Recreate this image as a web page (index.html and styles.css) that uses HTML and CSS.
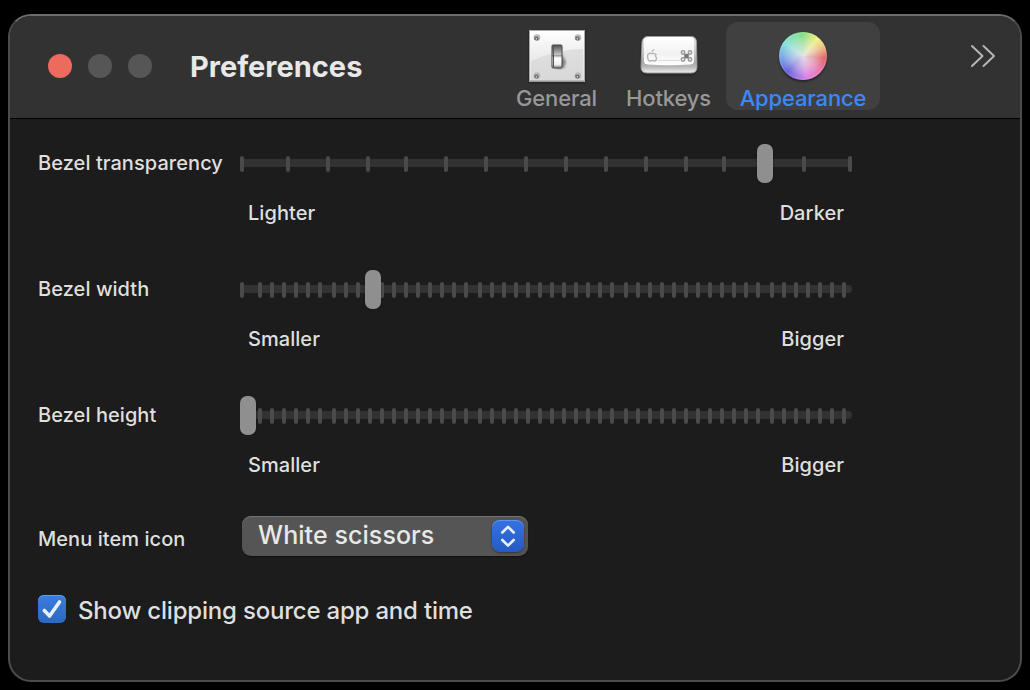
FILE: index.html
```html
<!DOCTYPE html>
<html lang="en">
<head>
<meta charset="utf-8">
<title>Preferences</title>
<link rel="stylesheet" href="styles.css">
</head>
<body>
<div class="window">
  <header class="titlebar">
    <div class="lights"><span class="light close"></span><span class="light"></span><span class="light"></span></div>
    <h1 class="title">Preferences</h1>
    <nav class="tabs">
      <div class="tab general">
        <svg class="icon" width="64" height="60" viewBox="0 0 64 60">
          <defs>
            <linearGradient id="plate" x1="0" y1="0" x2="0" y2="1"><stop offset="0" stop-color="#fff"/><stop offset=".5" stop-color="#ececec"/><stop offset="1" stop-color="#e0e0e0"/></linearGradient>
            <linearGradient id="slot" x1="0" y1="0" x2="0" y2="1"><stop offset="0" stop-color="#555"/><stop offset=".2" stop-color="#888"/><stop offset=".42" stop-color="#c4c4c4"/><stop offset=".46" stop-color="#999"/><stop offset=".56" stop-color="#fff"/><stop offset=".85" stop-color="#eee"/><stop offset="1" stop-color="#777"/></linearGradient>
            <radialGradient id="screw" cx=".4" cy=".7"><stop offset="0" stop-color="#fff"/><stop offset=".35" stop-color="#666"/><stop offset="1" stop-color="#bbb"/></radialGradient>
            <filter id="soft"><feGaussianBlur stdDeviation="1.3"/></filter>
            <filter id="fine"><feGaussianBlur stdDeviation=".5"/></filter>
          </defs>
          <rect x="4" y="7" width="56" height="52" fill="#111" opacity=".5" filter="url(#soft)"/>
          <rect x="4.500" y="6.500" width="55" height="51" fill="url(#plate)" stroke="#aaa"/>
          <path d="M6 37Q34 25 58 25V56H6Z" fill="#d0d0d0" opacity=".5"/>
          <path d="M5 57H59" stroke="#888"/>
          <path d="M37 30L41 38L39 44L31 45Z" fill="#444" opacity=".6" filter="url(#soft)"/>
          <g filter="url(#fine)">
            <rect x="27" y="21" width="10" height="23" rx="1" fill="url(#slot)" stroke="#444"/>
            <path d="M28.500 22v21" stroke="#555"/>
            <g fill="url(#screw)"><circle cx="12" cy="13.500" r="3.300"/><circle cx="53" cy="13.500" r="3.300"/><circle cx="12" cy="51.500" r="3.300"/><circle cx="53" cy="51.500" r="3.300"/></g>
          </g>
        </svg>
        <span class="tab-label general-label">General</span>
      </div>
      <div class="tab hotkeys">
        <svg class="icon" width="64" height="60" viewBox="0 0 64 60">
          <defs>
            <linearGradient id="side" x1="0" y1="0" x2="0" y2="1"><stop offset="0" stop-color="#eee"/><stop offset=".7" stop-color="#aaa"/><stop offset=".83" stop-color="#b8b8b8"/><stop offset="1" stop-color="#f0f0f0"/></linearGradient>
            <linearGradient id="face" x1="0" y1="0" x2="0" y2="1"><stop offset="0" stop-color="#fff"/><stop offset=".6" stop-color="#f2f2f2"/><stop offset="1" stop-color="#fff"/></linearGradient>
          </defs>
          <rect x="4" y="15" width="56" height="36" rx="7" fill="#111" opacity=".5" filter="url(#soft)"/>
          <path d="M11 12.500H54Q59 12.500 59.500 18L60 43Q60 49 54 49H10Q4 49 4 43L5 18Q6 12.500 11 12.500Z" fill="url(#side)" stroke="#999"/>
          <path filter="url(#fine)" d="M12 13H53Q57 13.500 57 18V37Q57 40 53 40.500Q32 42 11 40.500Q7 40 7 37V18Q7 13.500 12 13Z" fill="url(#face)"/>
          <g filter="url(#fine)">
            <path d="M14.500 29.500Q10.500 28.500 10.500 32.500Q11 37.500 13.500 37Q15.500 36 17.500 37Q19.500 37 19.500 33.500Q17.500 32 19 30.500Q16.500 29 14.500 29.500M15 27.500l2-2" fill="none" stroke="#b4b4b4" stroke-width="1.400"/>
            <rect x="47.200" y="29.800" width="4.600" height="4.600" fill="#777"/>
            <g fill="none" stroke="#999" stroke-width="1.500"><circle cx="46" cy="28.500" r="1.700"/><circle cx="53" cy="28.500" r="1.700"/><circle cx="46" cy="35.500" r="1.700"/><circle cx="53" cy="35.500" r="1.700"/></g>
          </g>
          <path d="M21 36.500h22" stroke="#ddd"/>
        </svg>
        <span class="tab-label hotkeys-label">Hotkeys</span>
      </div>
      <div class="tab appearance selected">
        <div class="icon wheel-box"><div class="wheel"></div></div>
        <span class="tab-label appearance-label">Appearance</span>
      </div>
    </nav>
    <svg class="more" width="28" height="26" viewBox="0 0 28 26" fill="none" stroke="#b5b5b5" stroke-width="2" stroke-linecap="round" stroke-linejoin="round"><path d="M2 3L12.500 13L2 23M13.500 3L24 13L13.500 23"/></svg>
  </header>
  <main class="content">
    <section class="field">
      <label class="name">Bezel transparency</label>
      <svg class="slider" data-count="16" data-step="39.733" data-value="765" width="612" height="40" viewBox="240 0 612 40"></svg>
      <div class="range"><span>Lighter</span><span>Darker</span></div>
    </section>
    <section class="field">
      <label class="name">Bezel width</label>
      <svg class="slider" data-count="50" data-step="12.165" data-value="373" width="612" height="40" viewBox="240 0 612 40"></svg>
      <div class="range"><span>Smaller</span><span>Bigger</span></div>
    </section>
    <section class="field">
      <label class="name">Bezel height</label>
      <svg class="slider" data-count="50" data-step="12.165" data-value="248" width="612" height="40" viewBox="240 0 612 40"></svg>
      <div class="range"><span>Smaller</span><span>Bigger</span></div>
    </section>
    <section class="menu-row">
      <label class="name">Menu item icon</label>
      <div class="select">
        <span class="select-text">White scissors</span>
        <span class="stepper"><svg width="32" height="32" viewBox="0 0 32 32" fill="none" stroke="#e8eefb" stroke-width="2.600" stroke-linecap="round" stroke-linejoin="round"><path d="M10.300 12.500L16 6.800L21.700 12.500M10.300 20L16 25.700L21.700 20"/></svg></span>
      </div>
    </section>
    <section class="check-row">
      <span class="checkbox"><svg width="28" height="28" viewBox="0 0 28 28" fill="none" stroke="#e8effb" stroke-width="3.600" stroke-linecap="round" stroke-linejoin="round"><path d="M6.300 15.500L11.600 21L21.500 7"/></svg></span>
      <span class="check-text">Show clipping source app and time</span>
    </section>
  </main>
</div>
<script src="sliders.js"></script>
</body>
</html>
```
FILE: styles.css
```css
* { box-sizing: border-box; }
body { margin: 0; padding: 14px 8px 8px; height: 690px; background: #000; font-family: Inter, "Liberation Sans", sans-serif; font-weight: 450; color: #dfdfdf; overflow: hidden; }
.window { height: 668px; border: 2px solid #4c4c4c; border-top-color: #6c6c6c; border-radius: 23px; background: #1c1c1c; overflow: hidden; }
.titlebar { display: flex; height: 103px; background: #323232; border-bottom: 1px solid #000; }
.lights { display: flex; gap: 16px; padding: 38px 0 0 38px; width: 180px; }
.light { width: 24px; height: 24px; border-radius: 50%; background: #565656; }
.close { background: #ed6a5f; }
.title { margin: 0; width: 312px; padding-top: 33px; font-size: 29px; line-height: 35px; font-weight: 700; letter-spacing: 0; color: #e8e8e8; white-space: nowrap; }
.tabs { display: flex; padding-top: 6px; }
.tab { display: flex; flex-direction: column; align-items: center; height: 88px; padding-top: 2px; border-radius: 12px; color: #989898; }
.general { width: 110px; }
.hotkeys { width: 114px; }
.appearance { width: 154px; }
.selected { background: #404040; color: #3b88fb; }
.icon { flex: none; height: 60px; }
.tab-label { font-size: 22px; line-height: 28px; letter-spacing: -.15px; white-space: nowrap; }
.general-label, .hotkeys-label { margin-right: 1px; }
.wheel-box { display: flex; align-items: center; padding-top: 4px; }
.wheel { width: 48px; height: 48px; border-radius: 50%; background: radial-gradient(circle, rgba(232,232,232,.9), rgba(232,232,232,.5) 35%, rgba(232,232,232,.15) 60%, transparent 70%), conic-gradient(#79e079, #f5f276 40deg, #eebc78 65deg, #e0575c 95deg, #e96bab 130deg, #dd75e6 170deg, #9a68e6 195deg, #5b55dc 225deg, #6793e8 260deg, #7ce0d8 305deg, #79e079); box-shadow: inset 0 0 2px 1px rgba(255,255,255,.25), 0 2px 2px rgba(0,0,0,.4); }
.more { margin: 27px 0 0 90px; }
.content { padding: 24px 0 0 28px; }
.field { display: grid; grid-template-columns: 202px 612px; grid-template-rows: 40px 24px; row-gap: 18px; margin-bottom: 44px; }
.field:nth-of-type(3) { margin-bottom: 39px; }
.name { font-size: 20px; line-height: 40px; letter-spacing: .06px; white-space: nowrap; }
.slider { display: block; }
.track { fill: #323232; }
.tick { fill: #4a4a4a; }
.thumb { fill: #8f8f8f; filter: drop-shadow(0 1px 1px rgba(0,0,0,.35)); }
.range { grid-column: 2; display: flex; justify-content: space-between; padding: 0 8px; font-size: 20px; line-height: 24px; letter-spacing: .05px; }
.menu-row { display: flex; height: 40px; margin-bottom: 39px; }
.menu-row .name { width: 204px; line-height: 46px; }
.select { display: flex; justify-content: space-between; width: 286px; height: 40px; padding: 4px 4px 4px 16px; border-radius: 9px; background: #555; box-shadow: inset 0 1px #737373, 0 1px 1px #111; }
.select-text { font-size: 25px; line-height: 31px; letter-spacing: .07px; color: #e8e8e8; white-space: nowrap; }
.stepper { width: 32px; height: 32px; border-radius: 8px; background: linear-gradient(#3472e1, #265bc4); box-shadow: inset 0 1px #6394eb, 0 1px 2px #333; }
.check-row { display: flex; gap: 12px; height: 28px; }
.checkbox { width: 28px; height: 28px; border-radius: 6px; background: linear-gradient(#397ddf, #2c69c0); box-shadow: inset 0 1px #679ce7; }
.check-text { font-size: 24px; line-height: 31px; letter-spacing: -.2px; white-space: nowrap; }
```
FILE: sliders.js
```js
// Draws the track, tick marks and thumb of each slider.
const NS = 'http://www.w3.org/2000/svg';
function rect(svg, cls, x, y, width, height, rx) {
  const node = document.createElementNS(NS, 'rect');
  node.setAttribute('class', cls);
  Object.entries({ x, y, width, height, rx }).forEach(([k, v]) => node.setAttribute(k, v));
  svg.appendChild(node);
}
document.querySelectorAll('.slider').forEach((svg) => {
  const count = Number(svg.dataset.count);
  const step = Number(svg.dataset.step);
  rect(svg, 'track', 240, 16, 612, 8, 4);
  for (let i = 0; i < count; i++) {
    let center = Math.round((248 + i * step) / 2) * 2;
    if (i === 0) center = 242;
    if (count === 16 && i === 15) center = 850;
    rect(svg, 'tick', center - 2, 13, 4, 16, 2);
  }
  rect(svg, 'thumb', svg.dataset.value - 8, 1, 16, 39, 7);
});
```
